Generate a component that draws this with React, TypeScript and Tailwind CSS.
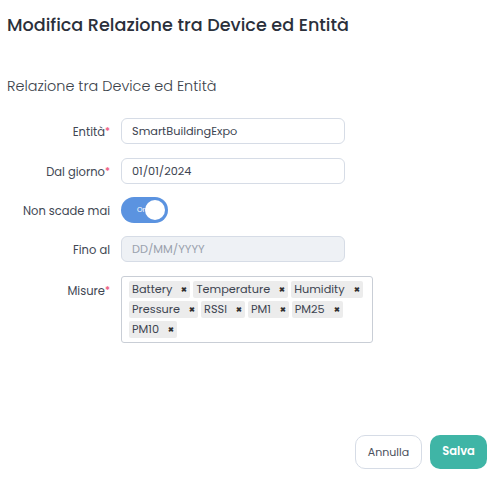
import { useState } from "react";

const font = { fontFamily: "Poppins, Inter, 'Noto Sans', sans-serif" };

const misure = ["Battery", "Temperature", "Humidity", "Pressure", "RSSI", "PM1", "PM25", "PM10"];

const Label = ({ text, required }: { text: string; required?: boolean }) => (
  <label className="block w-[106px] shrink-0 pr-[3px] pt-[4px] text-right text-[11.5px] text-[#414753]">
    {text}
    {required && <span className="relative top-[-1px] text-[10px] font-medium text-[#ee5a80]">*</span>}
  </label>
);

export default function App() {
  const [tags, setTags] = useState(misure);

  return (
    <div style={font} className="flex h-[481px] w-full flex-col bg-white px-[7px] text-[#2d3340]">
      {/* Title */}
      <h1 className="mt-[13px] text-[17.6px] font-medium leading-[24px] text-[#2b303b]">
        Modifica Relazione tra Device ed Entità
      </h1>

      {/* Section */}
      <h2 className="mt-[39px] text-[14.4px] font-light leading-[20px] text-[#3a3f4a]">
        Relazione tra Device ed Entità
      </h2>

      {/* Form */}
      <div className="mt-[22px] flex flex-col">
        <div className="flex items-center gap-[8px]">
          <Label text="Entità" required />
          <input
            defaultValue="SmartBuildingExpo"
            className="h-[26px] w-[224px] rounded-[6px] border border-[#d6dce6] px-[10px] text-[11.3px] text-[#3d4451] outline-none"
          />
        </div>

        <div className="mt-[14px] flex items-center gap-[8px]">
          <Label text="Dal giorno" required />
          <input
            defaultValue="01/01/2024"
            className="h-[26px] w-[224px] rounded-[6px] border border-[#d6dce6] px-[10px] text-[11.3px] text-[#3d4451] outline-none"
          />
        </div>

        <div className="mt-[13px] flex h-[26px] items-center gap-[8px]">
          <Label text="Non scade mai" />
          <button className="relative h-[26px] w-[47px] rounded-full bg-[#5b93e0]">
            <span className="absolute left-[16px] top-[8px] text-[7px] leading-[10px] text-white">On</span>
            <span className="absolute right-[3px] top-[3px] h-[20px] w-[20px] rounded-full bg-white" />
          </button>
        </div>

        <div className="mt-[13px] flex items-center gap-[8px]">
          <Label text="Fino al" />
          <input
            disabled
            placeholder="DD/MM/YYYY"
            className="h-[26px] w-[224px] rounded-[6px] border border-[#d6dce6] bg-[#eef1f5] px-[10px] text-[11.3px] placeholder:text-[#9aa1ad] outline-none"
          />
        </div>

        <div className="mt-[14px] flex items-start gap-[8px]">
          <div className="pt-[3px]">
            <Label text="Misure" required />
          </div>
          <div className="flex w-[252px] flex-wrap content-start gap-[3px] rounded-[3px] border border-[#c9ced6] px-[7px] py-[4px]">
            {tags.map((t) => (
              <span
                key={t}
                className="flex h-[17px] items-center gap-[9px] rounded-[2px] bg-[#ececec] pl-[3px] pr-[3px] text-[11.3px] leading-none text-[#3d4451]"
              >
                {t}
                <button
                  onClick={() => setTags(tags.filter((x) => x !== t))}
                  className="text-[7px] font-bold leading-none text-[#333]"
                >
                  ✖
                </button>
              </span>
            ))}
          </div>
        </div>
      </div>

      {/* Footer */}
      <div className="mt-auto mb-[12px] mr-[-1px] flex justify-end gap-[8px]">
        <button className="h-[34px] w-[67px] rounded-[10px] border border-[#d6dce6] bg-white text-[11px] text-[#4a505c]">
          Annulla
        </button>
        <button className="h-[34px] w-[57px] rounded-[10px] bg-[#3fb5a6] text-[11.5px] font-semibold text-white">
          Salva
        </button>
      </div>
    </div>
  );
}
